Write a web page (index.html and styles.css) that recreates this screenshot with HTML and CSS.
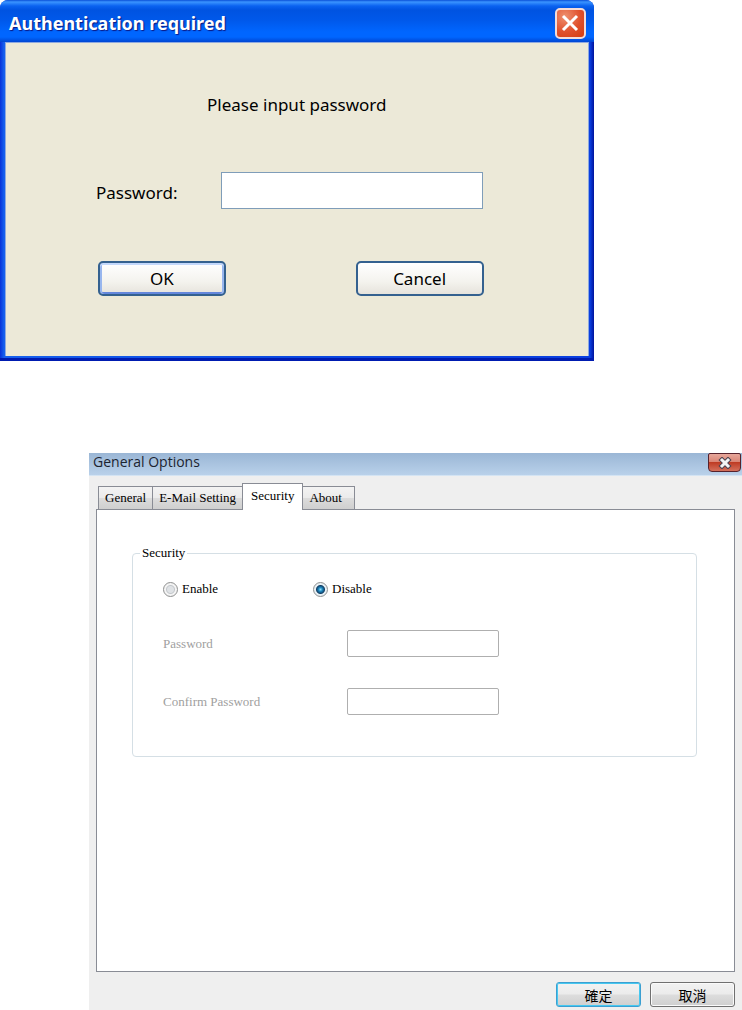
FILE: index.html
```html
<!DOCTYPE html>
<html lang="en">
<head>
    <meta charset="UTF-8">
    <meta name="viewport" content="width=device-width, initial-scale=1.0">
    <title>General Options</title>
    <link rel="stylesheet" href="styles.css">
</head>
<body>
    <!-- Login dialog -->
    <section class="auth">
        <header class="auth-title">
            <h1>Authentication required</h1>
            <button type="button" class="auth-close" aria-label="Close">
                <svg viewBox="0 0 18 18" width="18" height="18">
                    <path d="M2 2L16 16M16 2L2 16" stroke="#fff" stroke-width="3" fill="none"/>
                </svg>
            </button>
        </header>
        <form class="auth-body">
            <p class="auth-message">Please input password</p>
            <div class="auth-row">
                <label for="authPassword">Password:</label>
                <input type="password" id="authPassword">
            </div>
            <div class="auth-row auth-actions">
                <button type="button" class="auth-btn default">OK</button>
                <button type="button" class="auth-btn">Cancel</button>
            </div>
        </form>
    </section>

    <!-- Options window -->
    <section class="options">
        <header class="options-title">
            <h2>General Options</h2>
            <button type="button" class="options-close" aria-label="Close">
                <svg viewBox="0 0 14 12" width="14" height="12">
                    <path d="M4 3L10 9M10 3L4 9" stroke="#4c4350" stroke-width="5" stroke-linecap="square" fill="none"/>
                    <path d="M4 3L10 9M10 3L4 9" stroke="#f4f4f4" stroke-width="3" stroke-linecap="square" fill="none"/>
                </svg>
            </button>
        </header>
        <div class="options-body">
            <div class="tabs" role="tablist">
                <button type="button" class="tab" role="tab">General</button>
                <button type="button" class="tab" role="tab">E-Mail Setting</button>
                <button type="button" class="tab active" role="tab" aria-selected="true">Security</button>
                <button type="button" class="tab" role="tab">About</button>
            </div>
            <div class="panel" role="tabpanel">
                <fieldset class="group">
                    <legend>Security</legend>
                    <div class="radios">
                        <label class="radio"><input type="radio" name="security">Enable</label>
                        <label class="radio"><input type="radio" name="security" checked>Disable</label>
                    </div>
                    <div class="field">
                        <label for="password">Password</label>
                        <input type="password" id="password" disabled>
                    </div>
                    <div class="field">
                        <label for="confirmPassword">Confirm Password</label>
                        <input type="password" id="confirmPassword" disabled>
                    </div>
                </fieldset>
            </div>
            <footer class="options-actions">
                <button type="button" class="btn default" lang="zh-Hant">確定</button>
                <button type="button" class="btn" lang="zh-Hant">取消</button>
            </footer>
        </div>
    </section>
</body>
</html>
```
FILE: styles.css
```css
* {
    box-sizing: border-box;
}
body {
    margin: 0;
    background: #fff;
    color: #000;
}
h1, h2, p {
    margin: 0;
}
button {
    padding: 0;
    color: inherit;
    font: inherit;
}

/* Login dialog */
.auth {
    width: 80%;
    border-radius: 8px 8px 0 0;
    background: linear-gradient(90deg, #0831d9, #1660ee 4px, #0a48e0 50%, #0a3fe0 calc(100% - 4px), #00139c);
    border-bottom: 3px solid #001bb0;
    font-family: "Noto Sans", sans-serif;
    font-size: 17px;
    line-height: 24px;
}
.auth-title {
    display: flex;
    align-items: center;
    justify-content: space-between;
    height: 42px;
    padding: 4px 8px 0 9px;
    border-radius: 8px 8px 0 0;
    background: linear-gradient(#0a50d8, #3a94ff 2px, #0a62f0 6px, #0053e1 10px, #0058ea 20px, #0066ff 32px, #0066ff 37px, #0046d2);
    color: #fff;
}
.auth-title h1 {
    font-family: "Noto Sans", sans-serif;
    font-size: 18px;
    font-weight: bold;
    line-height: 24px;
    text-shadow: 1px 1px 1px #0a1883;
}
.auth-close {
    display: flex;
    align-items: center;
    justify-content: center;
    width: 31px;
    height: 31px;
    border: 2px solid #f4dcd8;
    border-radius: 5px;
    background: radial-gradient(circle at 30% 25%, #ee9170, #e0502c 55%, #d33c10);
}
.auth-body {
    margin: 0 5px 2px;
    padding: 50px 0 60px;
    border: 1px solid #8ea9e0;
    border-width: 1px 1px 0;
    background: #ece9d8;
}
.auth-message {
    margin-bottom: 55px;
    text-align: center;
}
.auth-row {
    display: flex;
    align-items: center;
    justify-content: space-between;
    padding: 0 105px 0 90px;
}
.auth-row label {
    padding-top: 4px;
}
.auth-row input {
    width: 262px;
    height: 37px;
    padding: 4px 8px;
    border: 1px solid #7f9db9;
    background: #fff;
    font: inherit;
}
.auth-actions {
    margin-top: 52px;
    padding: 0 104px 0 92px;
}
.auth-btn {
    width: 128px;
    height: 35px;
    border: 2px solid #34618f;
    border-radius: 5px;
    background: linear-gradient(#fff, #f4f3ee 60%, #e6e3dc);
}
.auth-btn.default {
    box-shadow: inset 0 2px #c3d8fb, inset 2px 0 #98b6ee, inset -2px 0 #98b6ee, inset 0 -2px #6487dc;
}

/* Options window */
.options {
    margin: 92px 0 0 12%;
    background: #efefef;
    font-family: "Liberation Serif", serif;
    font-size: 13px;
    line-height: 18px;
}
.options-title {
    display: flex;
    align-items: flex-start;
    justify-content: space-between;
    height: 23px;
    padding: 0 1px 0 4px;
    border-bottom: 1px solid #d4e4f3;
    background: linear-gradient(#9ab6d5, #b9d1ea);
}
.options-title h2 {
    color: #1c2430;
    font-family: "Open Sans", sans-serif;
    font-size: 14px;
    font-weight: normal;
    line-height: 18px;
}
.options-close {
    display: flex;
    align-items: center;
    justify-content: center;
    width: 33px;
    height: 19px;
    border: 1px solid #56222c;
    border-radius: 2px 2px 4px 4px;
    background: linear-gradient(#e7a79b, #d98474 48%, #bf3c24 50%, #d4705c);
}
.options-body {
    padding: 7px 7px 4px;
}
.tabs {
    display: flex;
    align-items: flex-end;
    height: 26px;
    padding-left: 2px;
}
.tab {
    height: 23px;
    margin-right: -1px;
    padding: 0 6px;
    border: 1px solid #898c95;
    border-bottom: 0;
    background: linear-gradient(#f3f3f3, #ebebeb 50%, #dcdcdc 52%, #cfcfcf);
}
.tab:last-child {
    padding-right: 12px;
}
.tab.active {
    height: 27px;
    margin-bottom: -1px;
    padding: 0 8px 3px;
    background: #fff;
    z-index: 1;
}
.panel {
    min-height: 463px;
    padding: 34px 37px 34px 35px;
    border: 1px solid #898c95;
    background: #fff;
}
.group {
    min-width: 0;
    margin: 0;
    padding: 18px 30px 41px;
    border: 1px solid #d5dfe5;
    border-radius: 4px;
}
.group legend {
    margin-left: -23px;
    padding: 0 2px;
}
.radios {
    display: flex;
    margin-bottom: 32px;
}
.radio {
    display: flex;
    align-items: center;
    gap: 4px;
    width: 150px;
}
.radio input {
    appearance: none;
    width: 15px;
    height: 15px;
    margin: 0;
    border: 1px solid #8e8f8f;
    border-radius: 50%;
    background: radial-gradient(circle, #dfe2e5 0 3px, #c4c8cc 4px, #f4f4f4 5px);
}
.radio input:checked {
    background: radial-gradient(circle, #8fdcfa, #1c86bd 2px, #123f66 4px, #e8f0f4 5px);
}
.field {
    display: flex;
    align-items: center;
    margin-bottom: 31px;
    color: #a0a0a0;
}
.field:last-child {
    margin-bottom: 0;
}
.field label {
    width: 184px;
}
.field input {
    width: 152px;
    height: 27px;
    padding: 2px 4px;
    border: 1px solid #afafaf;
    border-radius: 2px;
    background: #fff;
    font: inherit;
}
.options-actions {
    display: flex;
    justify-content: flex-end;
    gap: 9px;
    padding-top: 10px;
}
.btn {
    width: 85px;
    height: 25px;
    border: 1px solid #707070;
    border-radius: 3px;
    background: linear-gradient(#f2f2f2, #ebebeb 49%, #dddddd 51%, #cfcfcf);
    box-shadow: inset 0 0 0 1px #fafafa;
    font-family: "Noto Sans CJK TC", sans-serif;
    font-size: 14px;
    line-height: 18px;
}
.btn.default {
    border-color: #3c9fd1;
    box-shadow: inset 0 0 0 1px #46c8f0;
}
```
